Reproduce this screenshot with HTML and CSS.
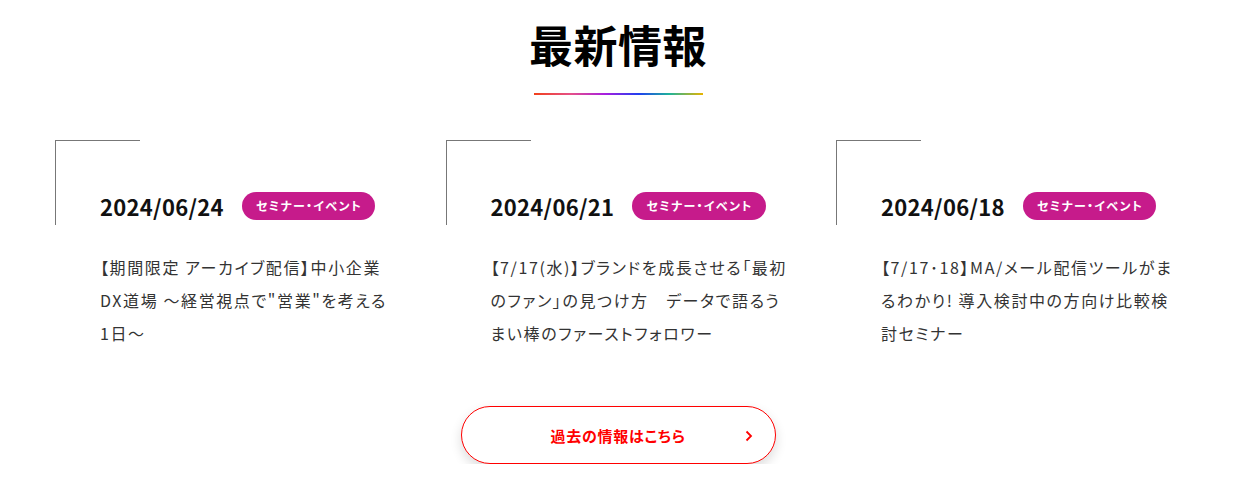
FILE: index.html
```html
<!DOCTYPE html>
<html lang="ja">
<head>
<meta charset="utf-8">
<title>最新情報</title>
<link rel="stylesheet" href="styles.css">
</head>
<body>
<section class="news">
  <h1 class="news-title">最新情報</h1>
  <div class="news-rule"></div>
  <div class="news-list">
    <article class="card">
      <div class="card-head">
        <span class="card-date">2024/06/24</span>
        <span class="badge">セミナー・イベント</span>
      </div>
      <p class="card-text">【期間限定 アーカイブ配信】中小企業DX道場 ～経営視点で"営業"を考える1日～</p>
    </article>
    <article class="card">
      <div class="card-head">
        <span class="card-date">2024/06/21</span>
        <span class="badge">セミナー・イベント</span>
      </div>
      <p class="card-text">【7/17(水)】ブランドを成長させる「最初のファン」の見つけ方　データで語るうまい棒のファーストフォロワー</p>
    </article>
    <article class="card">
      <div class="card-head">
        <span class="card-date">2024/06/18</span>
        <span class="badge">セミナー・イベント</span>
      </div>
      <p class="card-text">【7/17･18】MA/メール配信ツールがまるわかり! 導入検討中の方向け比較検討セミナー</p>
    </article>
  </div>
  <div class="more-wrap">
    <a class="more-btn" href="#">
      <span class="more-label">過去の情報はこちら</span>
      <svg class="more-arrow" width="8" height="12" viewBox="0 0 8 12" aria-hidden="true"><path d="M1.5 1.5 L6 6 L1.5 10.5" fill="none" stroke="#f00" stroke-width="1.8"/></svg>
    </a>
  </div>
</section>
</body>
</html>
```
FILE: styles.css
```css
* { box-sizing: border-box; }
html, body { margin: 0; padding: 0; background: #fff; }
body {
  font-family: "Noto Sans CJK JP", "Noto Sans", sans-serif;
  color: #222;
  font-feature-settings: "palt";
}
.news {
  width: 1126px;
  margin: 0 0 0 55px;
  padding-top: 11px;
  display: flex;
  flex-direction: column;
  align-items: center;
}
.news-title {
  margin: 0;
  font-size: 44px;
  line-height: 66px;
  font-weight: 700;
  color: #000;
  letter-spacing: 0.5px;
}
.news-rule {
  margin-top: 16px;
  width: 169px;
  height: 2px;
  background: linear-gradient(90deg, #f2401a 0%, #e5508a 22%, #a81ee0 42%, #1f3ff0 62%, #1eb39a 80%, #e8b400 100%);
}
.news-list {
  margin-top: 45px;
  width: 100%;
  display: grid;
  grid-template-columns: repeat(3, 345px);
  justify-content: space-between;
}
.card {
  position: relative;
  padding: 52px 0 0 45px;
}
.card::before {
  content: "";
  position: absolute;
  left: 0;
  top: 0;
  width: 84px;
  height: 84px;
  border-top: 1px solid #777;
  border-left: 1px solid #777;
}
.card-head {
  display: flex;
  align-items: center;
  gap: 18px;
  height: 28px;
}
.card-date {
  font-size: 22px;
  font-weight: 700;
  color: #111;
  line-height: 28px;
  letter-spacing: 0.3px;
}
.badge {
  background: #c61b8b;
  color: #fff;
  font-size: 12px;
  font-weight: 700;
  height: 28px;
  line-height: 28px;
  padding: 0 13px 0 14px;
  border-radius: 14px;
  letter-spacing: 1.3px;
}
.card-text {
  margin: 31px 0 0;
  width: 297px;
  font-size: 16px;
  line-height: 33px;
  color: #333;
  letter-spacing: 0.1em;
}
.more-wrap {
  margin-top: 56px;
  display: flex;
  justify-content: center;
}
.more-btn {
  width: 315px;
  height: 58px;
  border: 1px solid #f00;
  border-radius: 29px;
  box-shadow: 0 5px 12px rgba(0,0,0,0.14);
  display: flex;
  align-items: center;
  justify-content: center;
  position: relative;
  text-decoration: none;
  background: #fff;
}
.more-label {
  color: #f00;
  font-size: 15px;
  font-weight: 700;
  letter-spacing: 0.05em;
}
.more-arrow {
  position: absolute;
  right: 22px;
  top: 23px;
}
```
